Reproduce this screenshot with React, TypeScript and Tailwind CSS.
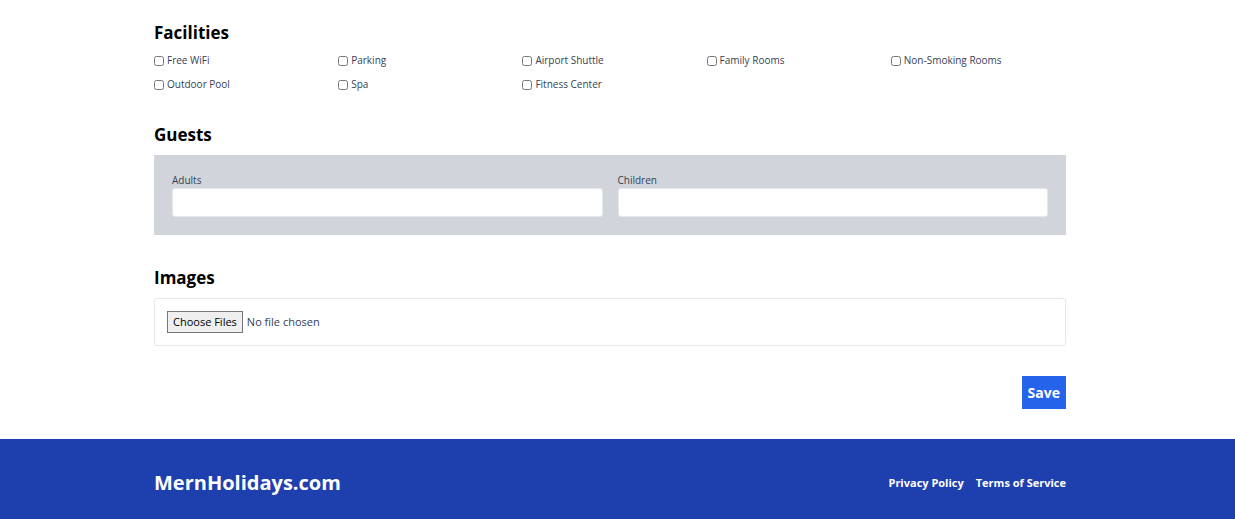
import React from "react";

const facilities: string[] = [
  "Free WiFi",
  "Parking",
  "Airport Shuttle",
  "Family Rooms",
  "Non-Smoking Rooms",
  "Outdoor Pool",
  "Spa",
  "Fitness Center",
];

function SectionTitle({ children }: { children: React.ReactNode }) {
  return <h2 className="mb-2 text-[17px] leading-[25px] font-bold">{children}</h2>;
}

function FacilitiesSection() {
  return (
    <section>
      <SectionTitle>Facilities</SectionTitle>
      <div className="grid grid-cols-5 gap-[9px]">
        {facilities.map((facility) => (
          <label
            key={facility}
            className="flex items-center gap-[3px] text-[10px] leading-[15px] text-gray-700"
          >
            <input type="checkbox" name="facilities" value={facility} className="size-[10px]" />
            {facility}
          </label>
        ))}
      </div>
    </section>
  );
}

function GuestField({ label, name }: { label: string; name: string }) {
  return (
    <label className="block text-[10px] leading-[15px] font-medium text-gray-700">
      {label}
      <input
        type="number"
        name={name}
        min={0}
        className="block h-[29px] w-full rounded-[3px] border border-gray-200 bg-white px-2 font-normal"
      />
    </label>
  );
}

function GuestsSection() {
  return (
    <section>
      <SectionTitle>Guests</SectionTitle>
      <div className="grid grid-cols-2 gap-[15px] bg-[#d1d5db] p-[18px]">
        <GuestField label="Adults" name="adultCount" />
        <GuestField label="Children" name="childCount" />
      </div>
    </section>
  );
}

function ImagesSection() {
  return (
    <section>
      <SectionTitle>Images</SectionTitle>
      <div className="flex rounded-[3px] border border-gray-200 p-3">
        <input
          type="file"
          multiple
          accept="image/*"
          name="imageFiles"
          aria-label="Images"
          className="h-[22px] w-full text-[11px] leading-4 text-gray-700 file:mr-1 file:h-[22px] file:border file:border-solid file:border-[#767676] file:bg-[#efefef] file:px-[5px] file:text-black"
        />
      </div>
    </section>
  );
}

function Footer() {
  return (
    <footer className="bg-[#1e40af] pt-7 pr-[15px] pb-5 text-white">
      <div className="mx-auto flex max-w-[912px] items-center justify-between">
        <span className="text-xl leading-8 font-bold">MernHolidays.com</span>
        <nav className="flex gap-3 text-[11px] leading-4 font-bold">
          <a href="#privacy">Privacy Policy</a>
          <a href="#terms">Terms of Service</a>
        </nav>
      </div>
    </footer>
  );
}

export default function App() {
  return (
    <div className="bg-white font-['Open_Sans','Noto_Sans',sans-serif] text-black">
      <main className="pt-5 pr-[15px] pb-[30px]">
        <form
          className="mx-auto flex max-w-[912px] flex-col gap-[30px]"
          onSubmit={(event) => event.preventDefault()}
        >
          <FacilitiesSection />
          <GuestsSection />
          <ImagesSection />
          <div className="flex justify-end">
            <button
              type="submit"
              className="bg-[#2563eb] p-[6px] text-[14px] leading-[21px] font-bold text-white hover:bg-[#3b82f6]"
            >
              Save
            </button>
          </div>
        </form>
      </main>
      <Footer />
    </div>
  );
}
